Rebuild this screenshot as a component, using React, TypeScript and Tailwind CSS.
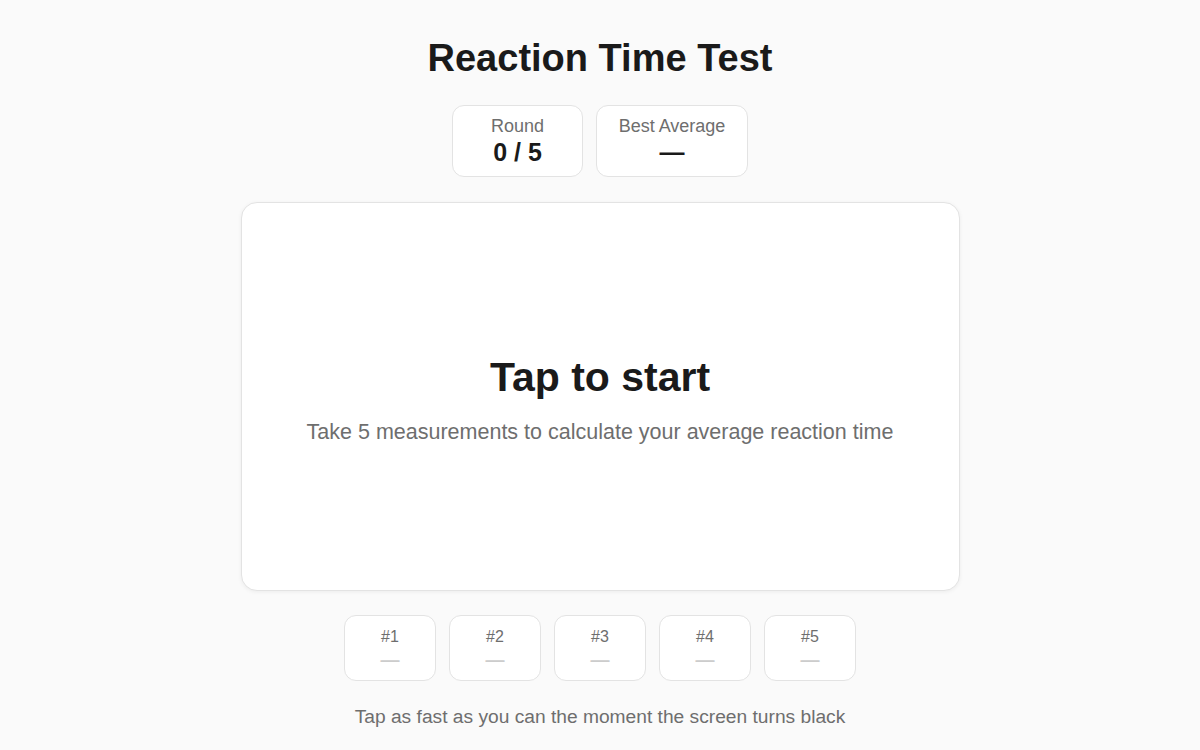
import { FC } from "react";

const StatBox: FC<{ label: string; value: string; width: string }> = ({ label, value, width }) => {
  return (
    <div className={`${width} h-[72px] bg-white border border-[#e3e3e3] rounded-[12px] flex flex-col items-center justify-center`}>
      <span className="mt-[1px] text-[18px] leading-[20px] text-[#6e6e6e]">{label}</span>
      <span className="mt-[1px] text-[25px] leading-[30px] font-bold text-[#1a1a1a]">{value}</span>
    </div>
  );
};

const RoundBox: FC<{ n: number }> = ({ n }) => {
  return (
    <div className="w-[92px] h-[66px] bg-white border border-[#e3e3e3] rounded-[12px] flex flex-col items-center pt-[11px]">
      <span className="text-[16px] leading-[20px] text-[#6e6e6e]">#{n}</span>
      <span className="text-[19px] leading-[26px] font-bold text-[#cccccc]">—</span>
    </div>
  );
};

const App: FC = () => {
  return (
    <div className="w-full min-h-[750px] bg-[#fafafa] flex flex-col items-center font-['Liberation_Sans',Arial,sans-serif]">
      <h1 className="mt-[35px] text-[38px] leading-[46px] font-bold text-[#1a1a1a]">Reaction Time Test</h1>

      <div className="mt-[24px] flex gap-[13px]">
        <StatBox label="Round" value="0 / 5" width="w-[131px]" />
        <StatBox label="Best Average" value="—" width="w-[152px]" />
      </div>

      <div className="mt-[25px] w-[719px] h-[389px] bg-white border border-[#e3e3e3] rounded-[16px] shadow-[0_1px_4px_rgba(0,0,0,0.06)] flex flex-col items-center justify-center pt-[4px] cursor-pointer">
        <h2 className="text-[41px] leading-[48px] font-bold text-[#1a1a1a]">Tap to start</h2>
        <p className="mt-[18px] text-[21.5px] leading-[26px] text-[#6e6e6e]">Take 5 measurements to calculate your average reaction time</p>
      </div>

      <div className="mt-[24px] flex gap-[13px]">
        {[1, 2, 3, 4, 5].map((n) => (
          <RoundBox key={n} n={n} />
        ))}
      </div>

      <p className="mt-[25px] text-[19.2px] leading-[22px] text-[#6e6e6e]">Tap as fast as you can the moment the screen turns black</p>
    </div>
  );
};

export default App;
